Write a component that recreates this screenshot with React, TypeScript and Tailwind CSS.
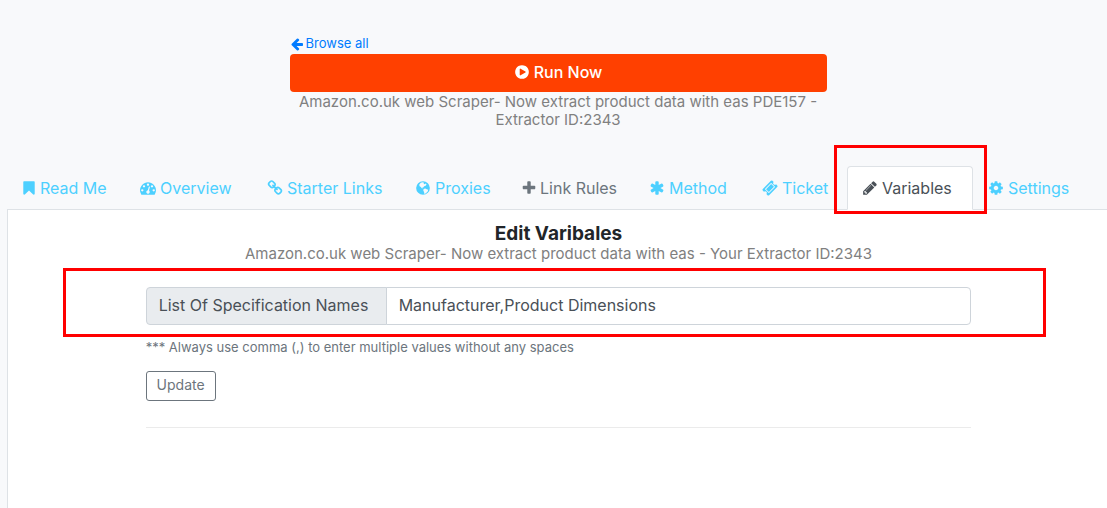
import { useState } from "react";

const icons = {
  arrowLeft:
    "M1664 896v128q0 53-32.5 90.5t-84.5 37.5h-704l293 294q38 36 38 90t-38 90l-75 76q-37 37-90 37-52 0-91-37l-651-652q-37-37-37-90 0-52 37-91l651-650q38-38 91-38 52 0 90 38l75 74q38 38 38 91t-38 91l-293 293h704q52 0 84.5 37.5t32.5 90.5z",
  play: "M896 128q209 0 385.5 103t279.5 279.5 103 385.5-103 385.5-279.5 279.5-385.5 103-385.5-103-279.5-279.5-103-385.5 103-385.5 279.5-279.5 385.5-103zm384 823q32-18 32-55t-32-55l-544-320q-31-19-64-1-32 19-32 56v640q0 37 32 56 16 8 32 8 17 0 32-9z",
  bookmark:
    "M1420 128q23 0 44 9 33 13 52.5 41t19.5 62v1289q0 34-19.5 62t-52.5 41q-19 8-44 8-48 0-83-32l-441-424-441 424q-36 33-83 33-23 0-44-9-33-13-52.5-41t-19.5-62v-1289q0-34 19.5-62t52.5-41q21-9 44-9h1048z",
  dashboard:
    "M384 1152q0-53-37.5-90.5t-90.5-37.5-90.5 37.5-37.5 90.5 37.5 90.5 90.5 37.5 90.5-37.5 37.5-90.5zm192-448q0-53-37.5-90.5t-90.5-37.5-90.5 37.5-37.5 90.5 37.5 90.5 90.5 37.5 90.5-37.5 37.5-90.5zm428 481l101-382q6-26-7.5-48.5t-38.5-29.5-48 6.5-30 39.5l-101 382q-60 5-107 43.5t-63 98.5q-20 77 20 146t117 89 146-20 89-117q16-60-6-117t-72-91zm660-33q0-53-37.5-90.5t-90.5-37.5-90.5 37.5-37.5 90.5 37.5 90.5 90.5 37.5 90.5-37.5 37.5-90.5zm-640-640q0-53-37.5-90.5t-90.5-37.5-90.5 37.5-37.5 90.5 37.5 90.5 90.5 37.5 90.5-37.5 37.5-90.5zm448 192q0-53-37.5-90.5t-90.5-37.5-90.5 37.5-37.5 90.5 37.5 90.5 90.5 37.5 90.5-37.5 37.5-90.5zm320 448q0 261-141 483-19 29-54 29h-1402q-35 0-54-29-141-221-141-483 0-182 71-348t191-286 286-191 348-71 348 71 286 191 191 286 71 348z",
  chain:
    "M1520 1216q0-40-28-68l-208-208q-28-28-68-28-42 0-72 32 3 3 19 18.5t21.5 21.5 15 19 13 25.5 3.5 27.5q0 40-28 68t-68 28q-15 0-27.5-3.5t-25.5-13-19-15-21.5-21.5-18.5-19q-33 31-33 73 0 40 28 68l206 207q27 27 68 27 40 0 68-26l147-146q28-28 28-67zm-703-705q0-40-28-68l-206-207q-28-28-68-28-39 0-68 27l-147 146q-28 28-28 67 0 40 28 68l208 208q27 27 68 27 42 0 72-31-3-3-19-18.5t-21.5-21.5-15-19-13-25.5-3.5-27.5q0-40 28-68t68-28q15 0 27.5 3.5t25.5 13 19 15 21.5 21.5 18.5 19q33-31 33-73zm895 705q0 120-85 203l-147 146q-83 83-203 83-121 0-204-85l-206-207q-83-83-83-203 0-123 88-209l-88-88q-86 88-208 88-120 0-204-84l-208-208q-84-84-84-204t85-203l147-146q83-83 203-83 121 0 204 85l206 207q83 83 83 203 0 123-88 209l88 88q86-88 208-88 120 0 204 84l208 208q84 84 84 204z",
  globe:
    "M896 128a768 768 0 1 0 0 1536a768 768 0 1 0 0-1536zM640 320l200-60 180 50-60 110 110 60 130-80 90 90-100 150-160 60-110 130-90 20 20 90-90-30-110-140-130-80-50-150zM960 1010l180-60 170 90 170 60-60 180-150 150-130 120-110-20-10-190-90-130z",
  plus: "M1600 736v192q0 40-28 68t-68 28h-416v416q0 40-28 68t-68 28h-192q-40 0-68-28t-28-68v-416h-416q-40 0-68-28t-28-68v-192q0-40 28-68t68-28h416v-416q0-40 28-68t68-28h192q40 0 68 28t28 68v416h416q40 0 68 28t28 68z",
  asterisk:
    "M1546 1050q46 26 59.5 77.5t-12.5 97.5l-64 110q-26 46-77.5 59.5t-97.5-12.5l-266-153v307q0 52-38 90t-90 38h-128q-52 0-90-38t-38-90v-307l-266 153q-46 26-97.5 12.5t-77.5-59.5l-64-110q-26-46-12.5-97.5t59.5-77.5l266-154-266-154q-46-26-59.5-77.5t12.5-97.5l64-110q26-46 77.5-59.5t97.5 12.5l266 153v-307q0-52 38-90t90-38h128q52 0 90 38t38 90v307l266-153q46-26 97.5-12.5t77.5 59.5l64 110q26 46 12.5 97.5t-59.5 77.5l-266 154z",
  ticket:
    "M1024 452l316 316-572 572-316-316zm-211 979l618-618q19-19 19-45t-19-45l-362-362q-18-18-45-18t-45 18l-618 618q-19 19-19 45t19 45l362 362q18 18 45 18t45-18zm889-637l-907 908q-37 37-90.5 37t-90.5-37l-126-126q56-56 56-136t-56-136-136-56-136 56l-125-126q-37-37-37-90.5t37-90.5l907-906q37-37 90.5-37t90.5 37l125 125q-56 56-56 136t56 136 136 56 136-56l126 125q37 37 37 90.5t-37 90.5z",
  pencil:
    "M491 1536l91-91-235-235-91 91v107h128v128h107zm523-928q0-22-22-22-10 0-17 7l-542 542q-7 7-7 17 0 22 22 22 10 0 17-7l542-542q7-7 7-17zm-54-192l416 416-832 832h-416v-416zm683 96q0 53-37 90l-166 166-416-416 166-165q36-38 90-38 53 0 91 38l235 234q37 39 37 91z",
  cog: "M1152 896q0-106-75-181t-181-75-181 75-75 181 75 181 181 75 181-75 75-181zm512-109v222q0 12-8 23t-20 13l-185 28q-19 54-39 91 35 50 107 138 10 12 10 25t-9 23q-27 37-99 108t-94 71q-12 0-26-9l-138-108q-44 23-91 38-16 136-29 186-7 28-36 28h-222q-14 0-24.5-8.5t-11.5-21.5l-28-184q-49-16-90-37l-141 107q-10 9-25 9-14 0-25-11-126-114-165-168-7-10-7-23 0-12 8-23 15-21 51-66.5t54-70.5q-27-50-41-99l-183-27q-13-2-21-12.5t-8-23.5v-222q0-12 8-23t19-13l186-28q14-46 39-92-40-57-107-138-10-12-10-24 0-10 9-23 26-36 98.5-107.5t94.5-71.5q13 0 26 10l138 107q44-23 91-38 16-136 29-186 7-28 36-28h222q14 0 24.5 8.5t11.5 21.5l28 184q49 16 90 37l142-107q9-9 24-9 13 0 25 10 129 119 165 170 7 8 7 22 0 12-8 23-15 21-51 66.5t-54 70.5q26 50 41 98l183 28q13 2 21 12.5t8 23.5z",
};

type IconName = keyof typeof icons;

function Icon({ name, className }: { name: IconName; className: string }) {
  // these two glyphs are narrower than their box
  const narrow = name === "bookmark" || name === "plus";

  return (
    <svg
      viewBox={narrow ? "128 0 1536 1792" : "0 0 1792 1792"}
      fill="currentColor"
      fillRule="evenodd"
      aria-hidden="true"
      className={`shrink-0 ${narrow ? "h-4 w-3.5" : className}`}
    >
      <path d={icons[name]} />
    </svg>
  );
}

type Tab = { label: string; icon: IconName; width: string; muted?: boolean };

const tabs: Tab[] = [
  { label: "Read Me", icon: "bookmark", width: "w-[118px]" },
  { label: "Overview", icon: "dashboard", width: "w-[127px]" },
  { label: "Starter Links", icon: "chain", width: "w-[148px]" },
  { label: "Proxies", icon: "globe", width: "w-[107px]" },
  { label: "Link Rules", icon: "plus", width: "w-[127px]", muted: true },
  { label: "Method", icon: "asterisk", width: "w-[113px]" },
  { label: "Ticket", icon: "ticket", width: "w-[100px]" },
  { label: "Variables", icon: "pencil", width: "w-[126px]" },
  { label: "Settings", icon: "cog", width: "w-[116px]" },
];

function TabLink({ tab }: { tab: Tab }) {
  const active = tab.label === "Variables";
  const color = active
    ? "border-[#dee2e6] border-b-white bg-white text-[#495057]"
    : tab.muted
      ? "border-transparent text-[#6c757d]"
      : "border-transparent text-[#4dd0ff]";

  return (
    <li className={`relative -mb-px shrink-0 ${tab.width}`}>
      <a
        href="#"
        aria-current={active ? "page" : undefined}
        className={`flex h-11 items-center gap-1 rounded-t border pl-3.5 whitespace-nowrap ${color}`}
      >
        <Icon name={tab.icon} className="size-4" />
        {tab.label}
      </a>
      {active && (
        <span className="pointer-events-none absolute -top-[21px] -right-[14px] -bottom-1 -left-[13px] border-3 border-[#ff0000]" />
      )}
    </li>
  );
}

export default function App() {
  const [names, setNames] = useState("Manufacturer,Product Dimensions");

  return (
    <div className="flex min-h-screen flex-col overflow-hidden bg-[#f8f9fb] pl-[7px] font-['Inter','Open_Sans',sans-serif] text-base">
      <div className="-mr-0.5">
        <header className="mx-auto flex w-[537px] max-w-full flex-col pt-[34px] text-[13px]">
          <a href="#" className="flex h-5 items-center gap-0.5 self-start text-[#007bff]">
            <Icon name="arrowLeft" className="size-3.5" />
            Browse all
          </a>
          <button className="flex h-[38px] items-center justify-center gap-1 rounded bg-[#ff4000] pb-0.5 text-base font-medium text-white">
            <Icon name="play" className="size-4" />
            Run Now
          </button>
          <p className="px-2 pt-px text-center text-[15px] leading-[18px] text-[#808080]">
            Amazon.co.uk web Scraper- Now extract product data with eas PDE157 -
            Extractor ID:2343
          </p>
        </header>
      </div>

      <nav className="mt-[37px] -mr-1">
        <ul className="flex border-b border-[#dee2e6]">
          {tabs.map((tab) => (
            <TabLink key={tab.label} tab={tab} />
          ))}
        </ul>
      </nav>

      <main className="-mr-0.5 flex-1 border-l border-[#dee2e6] bg-white pt-3">
        <h1 className="text-center text-[19px] leading-6 font-bold text-[#212529]">
          Edit Varibales
        </h1>
        <p className="text-center text-[15px] leading-4 text-[#808080]">
          Amazon.co.uk web Scraper- Now extract product data with eas - Your
          Extractor ID:2343
        </p>

        <form
          className="mx-auto mt-[25px] w-3/4"
          onSubmit={(e) => e.preventDefault()}
        >
          <div className="relative flex h-[38px]">
            <label
              htmlFor="spec-names"
              className="flex w-[241px] shrink-0 items-center rounded-l border border-[#ced4da] bg-[#e9ecef] pb-0.5 pl-3 whitespace-nowrap text-[#495057]"
            >
              List Of Specification Names
            </label>
            <input
              id="spec-names"
              type="text"
              value={names}
              onChange={(e) => setNames(e.target.value)}
              className="-ml-px min-w-0 flex-1 rounded-r border border-[#ced4da] bg-white px-3 pb-0.5 text-[#495057] outline-none"
            />
            <span className="pointer-events-none absolute -top-[19px] -right-[75px] -bottom-3 -left-[83px] border-3 border-[#ff0000]" />
          </div>
          <p className="mt-3 text-[13px] leading-5 text-[#6c757d]">
            *** Always use comma (,) to enter multiple values without any spaces
          </p>
          <button className="mt-[14px] h-[30px] w-[70px] rounded-[3px] border border-[#6c757d] pb-0.5 text-sm text-[#6c757d]">
            Update
          </button>
          <hr className="mt-[26px] border-[#ebebeb]" />
        </form>
      </main>
    </div>
  );
}
